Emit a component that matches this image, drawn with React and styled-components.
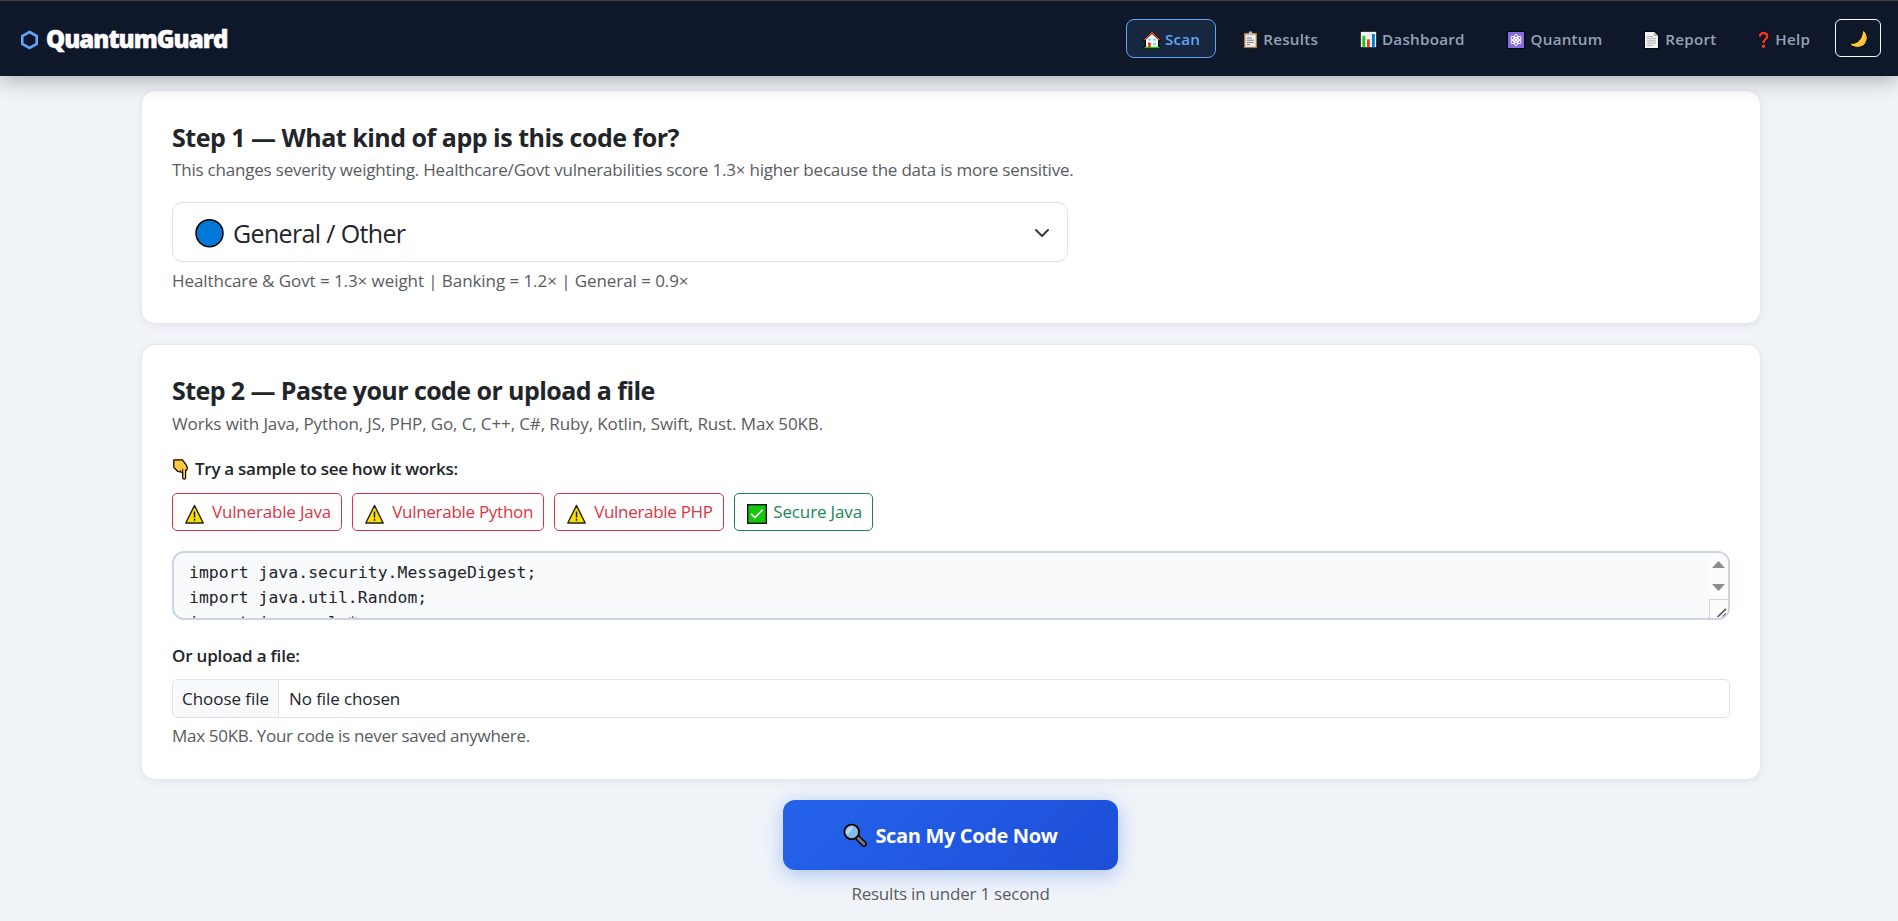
import React from 'react';
import styled, { createGlobalStyle, css } from 'styled-components';

const colors = {
  navy: '#0f172a',
  blue: '#60a5fa',
  slate: '#94a3b8',
  muted: '#595c5f',
  border: '#dee2e6',
  red: '#dc3545',
  green: '#198754'
};

const GlobalStyle = createGlobalStyle`
  * {
    box-sizing: border-box;
  }
  body {
    margin: 0;
    background: #f0f4f9;
    font-family: 'Open Sans', 'Noto Sans', sans-serif;
    font-size: 17px;
    line-height: 26px;
    color: #212529;
  }
  svg {
    display: block;
    flex-shrink: 0;
  }
`;

const Navbar = styled.nav`
  position: relative;
  display: flex;
  justify-content: space-between;
  height: 76px;
  padding: 18px 17px 0 20px;
  border-top: 1px solid #4d3f3d;
  background: ${colors.navy};
  box-shadow: 0 4px 20px rgba(0, 0, 0, 0.3);
`;

const Brand = styled.div`
  display: flex;
  align-items: center;
  gap: 7px;
  height: 40px;
  font-size: 24px;
  font-weight: 800;
  letter-spacing: -0.95px;
  color: #ffffff;
  -webkit-text-stroke: 0.5px #ffffff;
  svg {
    margin-top: 1px;
  }
`;

const NavMenu = styled.div`
  display: flex;
  gap: 7.8px;
`;

const NavItem = styled.a`
  display: flex;
  align-items: center;
  height: 39px;
  padding: 0 15px;
  border: 1px solid transparent;
  border-radius: 8px;
  font-size: 15.2px;
  font-weight: 600;
  letter-spacing: 0.25px;
  color: ${colors.slate};
  ${({ $active }) =>
    $active &&
    css`
      border-color: ${colors.blue};
      background: #172740;
      color: ${colors.blue};
    `}
`;

const IconSlot = styled.span`
  width: ${({ $width }) => $width}px;
  padding: 2px 0 0 ${({ $inset }) => $inset}px;
`;

const ThemeButton = styled.button`
  display: flex;
  align-items: center;
  justify-content: center;
  width: 46px;
  height: 38px;
  padding: 1px 0 0;
  margin-left: 1px;
  border: 1px solid #f8f9fa;
  border-radius: 6px;
  background: transparent;
`;

const Page = styled.main`
  display: flex;
  flex-direction: column;
  padding: 14px 137px 0 141px;
`;

const Card = styled.section`
  padding: ${({ $top }) => $top}px 30px ${({ $bottom }) => $bottom}px;
  margin-bottom: 20px;
  border: 1px solid #e2e8f0;
  border-radius: 14px;
  background: #ffffff;
  box-shadow: 0 2px 8px rgba(15, 23, 42, 0.06);
`;

const Title = styled.h2`
  margin: 0 0 ${({ $gap }) => $gap}px;
  font-size: 25px;
  line-height: 30px;
  font-weight: 700;
  letter-spacing: ${({ $track }) => $track}px;
`;

const Muted = styled.p`
  margin: 0;
  letter-spacing: ${({ $track }) => $track}px;
  color: ${colors.muted};
`;

const Select = styled.div`
  display: flex;
  align-items: center;
  gap: 9px;
  width: 896px;
  height: 60px;
  padding: 1px 17px 0 22px;
  margin: 19px 0 6px;
  border: 1px solid ${colors.border};
  border-radius: 10px;
  font-size: 25px;
  letter-spacing: -0.65px;
`;

const SelectValue = styled.span`
  flex: 1;
`;

const FieldLabel = styled.div`
  display: flex;
  align-items: center;
  gap: 7px;
  margin-top: ${({ $top }) => $top}px;
  font-weight: 600;
  letter-spacing: ${({ $track }) => $track}px;
  svg {
    margin-left: 1px;
  }
`;

const SampleRow = styled.div`
  display: flex;
  gap: 10px;
  margin: 11px 0 20px;
`;

const SampleButton = styled.button`
  display: flex;
  align-items: center;
  gap: ${({ $gap }) => $gap}px;
  height: 38px;
  padding: 0 10px 0 12px;
  border: 1px solid ${({ $color }) => $color};
  border-radius: 5px;
  background: transparent;
  font: inherit;
  letter-spacing: ${({ $track }) => $track}px;
  color: ${({ $color }) => $color};
  svg {
    margin-top: 3px;
  }
`;

const CodeBox = styled.div`
  display: flex;
  height: 69px;
  border: 2px solid #cbd5e1;
  border-radius: 12px;
  background: #f8fafc;
  overflow: hidden;
`;

const Code = styled.pre`
  flex: 1;
  margin: 0;
  padding: 7px 15px;
  overflow: hidden;
  font-family: 'DejaVu Sans Mono', 'Liberation Mono', monospace;
  font-size: 16.4px;
  line-height: 25px;
  letter-spacing: 0.06px;
`;

const ScrollColumn = styled.div`
  display: flex;
  flex-direction: column;
  align-items: center;
  gap: 16px;
  width: 19px;
  padding-top: 8px;
  background: #fcfcfc;
`;

const ResizeCorner = styled.div`
  width: 19px;
  height: 19px;
  margin-top: -8px;
  border-top: 1px solid #d4d4d4;
  border-left: 1px solid #d4d4d4;
`;

const FileInput = styled.div`
  display: flex;
  height: 39px;
  margin: 10px 0 5px;
  border: 1px solid ${colors.border};
  border-radius: 5px;
  line-height: 37px;
  overflow: hidden;
`;

const FileButton = styled.span`
  width: 106px;
  padding-left: 9px;
  border-right: 1px solid ${colors.border};
  background: #f8f9fa;
  letter-spacing: -0.05px;
`;

const FileName = styled.span`
  padding-left: 10px;
  letter-spacing: -0.1px;
`;

const ScanArea = styled.div`
  display: flex;
  flex-direction: column;
  align-items: center;
  gap: 11px;
  margin-right: 1px;
`;

const ScanButton = styled.button`
  display: flex;
  align-items: center;
  justify-content: center;
  gap: 8px;
  width: 335px;
  height: 70px;
  border: 0;
  border-radius: 12px;
  background: linear-gradient(135deg, #2563eb, #1d4ed8);
  box-shadow: 0 4px 20px rgba(37, 99, 235, 0.35);
  font-family: inherit;
  font-size: 20px;
  font-weight: 700;
  letter-spacing: -0.35px;
  color: #ffffff;
`;

const HexagonLogo = () => (
  <svg width="19" height="20" viewBox="0 0 19 20" fill="none" stroke={colors.blue} strokeWidth="2.6">
    <path d="M9.5 2 16.7 6V14L9.5 18 2.3 14V6Z" />
  </svg>
);

const HouseIcon = () => (
  <svg width="18" height="18" viewBox="0 0 18 18">
    <path d="M9 0 18 8.5V10H16.5V15.5H17.5V18H.5V15.5H1.5V10H0V8.5Z" fill="#05070c" />
    <path d="M3 8.5 9 3 15 8.5V16H3Z" fill="#f7f7f7" />
    <path d="M1.2 9 9 1.6 16.8 9" fill="none" stroke="#e8482f" strokeWidth="1.3" />
    <path d="M1.5 16.6H16.5" stroke="#16c60c" strokeWidth="1.4" />
    <rect x="5" y="11.5" width="2.8" height="4.7" fill="#f03a17" />
    <path d="M5 7.6H7.6V9.8H5ZM10.2 7.6H12.8V9.8H10.2ZM10.2 12H12.8V14.2H10.2Z" fill="#50e6ff" />
  </svg>
);

const ClipboardIcon = () => (
  <svg width="15" height="18" viewBox="0 0 15 18">
    <rect x="0" y="1" width="15" height="17" rx="1" fill="#05070c" />
    <rect x=".8" y="1.8" width="13.4" height="15.4" fill="#a4744d" />
    <rect x="2.3" y="3.4" width="10.4" height="12.4" fill="#f0f0f0" />
    <path d="M4 4.3V2.5H6V.6H9V2.5H11V4.3Z" fill="#b8b8b8" />
    <path d="M3.8 7H9M3.8 9.2H11M3.8 11.4H10.5M3.8 13.6H7" stroke="#6d6d6d" strokeWidth=".9" />
  </svg>
);

const ChartIcon = () => (
  <svg width="17" height="17" viewBox="0 0 17 17">
    <rect width="17" height="17" fill="#05070c" />
    <rect x=".8" y=".8" width="15.4" height="15.4" fill="#f5f5f5" />
    <path d="M1 4.5H16M1 8.5H16M1 12.5H16" stroke="#cfcfcf" strokeWidth=".6" />
    <rect x="2.4" y="5.2" width="2.8" height="11" fill="#16c60c" />
    <rect x="7" y="8.5" width="2.8" height="7.7" fill="#f03a17" />
    <rect x="12" y="3" width="2.8" height="13.2" fill="#0078d7" />
  </svg>
);

const AtomIcon = () => (
  <svg width="18" height="18" viewBox="0 0 18 18">
    <rect width="18" height="18" fill="#05070c" />
    <rect x="1" y="1" width="16" height="16" fill="#886ce4" />
    <g fill="none" stroke="#ffffff" strokeWidth="1">
      <ellipse cx="9" cy="9" rx="2.2" ry="5.6" />
      <ellipse cx="9" cy="9" rx="2.2" ry="5.6" transform="rotate(60 9 9)" />
      <ellipse cx="9" cy="9" rx="2.2" ry="5.6" transform="rotate(120 9 9)" />
    </g>
    <circle cx="9" cy="9" r="1.2" fill="#ffffff" />
  </svg>
);

const PageIcon = () => (
  <svg width="15" height="18" viewBox="0 0 15 18">
    <path d="M0 0H11L15 4V18H0Z" fill="#05070c" />
    <path d="M1 1H10.5V4.5H14V17H1Z" fill="#f2f2f2" />
    <path d="M10.5 1 14 4.5H10.5Z" fill="#cccccc" />
    <path d="M2.8 5.5H9M2.8 7.7H12M2.8 9.9H12M2.8 12.1H12M2.8 14.3H9" stroke="#a8a8a8" strokeWidth=".9" />
  </svg>
);

const QuestionIcon = () => (
  <svg width="11" height="18" viewBox="0 0 11 18" fill="none">
    <path d="M2 5.5C1.8 .8 9.2 .8 9.2 5.2 9.2 8.3 5.5 8 5.5 12" stroke="#05070c" strokeWidth="3.8" />
    <path d="M2 5.5C1.8 .8 9.2 .8 9.2 5.2 9.2 8.3 5.5 8 5.5 12" stroke="#f03a17" strokeWidth="2.5" />
    <circle cx="5.5" cy="15.3" r="1.7" fill="#f03a17" />
  </svg>
);

const MoonIcon = () => (
  <svg width="21" height="20" viewBox="0 0 21 20">
    <path
      d="M14.3 1C19.3 3.4 20.9 10 17.3 14.8 13.4 19.8 4.2 19.6 1.2 14 6 15 9.6 13.7 12 10.2 14 7.2 14.7 4 14.3 1Z"
      fill="#ffc83d"
      stroke="#05070c"
      strokeWidth="1"
      strokeLinejoin="round"
    />
    <path d="M17.4 6.5C18.4 9.5 17.8 12.5 15.5 14.7" fill="none" stroke="#f2a223" strokeWidth="1" />
  </svg>
);

const HandIcon = () => (
  <svg width="15" height="21" viewBox="0 0 15 21" stroke="#000000" strokeWidth="1.2" strokeLinejoin="round">
    <path
      d="M.8.8H9.4L13.3 6.2Q14.4 7.8 14.3 10L12.6 12.4V18.7Q12.4 20.1 11.1 20.1 9.8 20.1 9.7 18.7V13.4L4.8 12.5 .8 8.3Z"
      fill="#ffc83d"
    />
    <path d="M9.7 13.4V9.8M7.2 12.8V11.2M12.6 12.4V10.6" fill="none" strokeWidth=".9" />
  </svg>
);

const WarningIcon = () => (
  <svg width="19" height="20" viewBox="0 0 19 20">
    <path d="M9.5 1.5 18.2 19H.8Z" fill="#fce100" stroke="#1f1f1f" strokeWidth="1.4" strokeLinejoin="round" />
    <path d="M9.5 7.5V13.5M9.5 14.8V16.8" stroke="#1f1f1f" strokeWidth="1.5" />
  </svg>
);

const CheckIcon = () => (
  <svg width="20" height="20" viewBox="0 0 20 20" fill="none">
    <rect x=".7" y=".7" width="18.6" height="18.6" fill="#16c60c" stroke="#161616" strokeWidth="1.4" />
    <path d="M4.2 9.8 7.9 13.5 15.6 5.8" stroke="#ffffff" strokeWidth="1.6" />
  </svg>
);

const BlueCircle = () => (
  <svg width="29" height="30" viewBox="0 0 29 30">
    <circle cx="14.5" cy="15.2" r="13.5" fill="#0078d7" stroke="#000000" strokeWidth="1.5" />
  </svg>
);

const Chevron = () => (
  <svg width="16" height="16" viewBox="0 0 16 16" fill="none" stroke="#343a40" strokeWidth="2" strokeLinecap="round" strokeLinejoin="round">
    <path d="m2 5 6 6 6-6" />
  </svg>
);

const SearchIcon = () => (
  <svg width="24" height="24" viewBox="0 0 24 24">
    <path d="M14.5 14.5 21 21" stroke="#000000" strokeWidth="5.6" strokeLinecap="round" />
    <path d="M15 15 21 21" stroke="#767676" strokeWidth="3" strokeLinecap="round" />
    <circle cx="8.7" cy="8.9" r="7.2" fill="#83beec" stroke="#000000" strokeWidth="2.1" />
    <circle cx="8.7" cy="8.9" r="6.1" fill="none" stroke="#a8b4bd" strokeWidth=".8" />
    <path d="M3.4 9.6C3.5 5.8 6.5 3.6 10.2 3.9L4.6 12Z" fill="#b9dcf5" />
  </svg>
);

const ArrowUp = () => (
  <svg width="13" height="7" viewBox="0 0 13 7">
    <path d="M6.5 0 13 7H0Z" fill="#8b8b8b" />
  </svg>
);

const ArrowDown = () => (
  <svg width="13" height="7" viewBox="0 0 13 7">
    <path d="M0 0H13L6.5 7Z" fill="#8b8b8b" />
  </svg>
);

const ResizeGrip = () => (
  <svg width="18" height="18" viewBox="0 0 18 18" fill="none" stroke="#555555" strokeWidth="1.6">
    <path d="M7.5 17 16 8.8M12.5 17 16 13.6" />
  </svg>
);

const navItems = [
  { label: 'Scan', Icon: HouseIcon, width: 23, inset: 1, active: true },
  { label: 'Results', Icon: ClipboardIcon, width: 23.2, inset: 2.5 },
  { label: 'Dashboard', Icon: ChartIcon, width: 24, inset: 2 },
  { label: 'Quantum', Icon: AtomIcon, width: 26, inset: 2 },
  { label: 'Report', Icon: PageIcon, width: 23, inset: 2 },
  { label: 'Help', Icon: QuestionIcon, width: 19, inset: 2 }
];

const samples = [
  { label: 'Vulnerable Java', Icon: WarningIcon, color: colors.red, gap: 8, track: -0.18 },
  { label: 'Vulnerable Python', Icon: WarningIcon, color: colors.red, gap: 8, track: -0.28 },
  { label: 'Vulnerable PHP', Icon: WarningIcon, color: colors.red, gap: 8, track: -0.3 },
  { label: 'Secure Java', Icon: CheckIcon, color: colors.green, gap: 6.5, track: -0.15 }
];

const code = `import java.security.MessageDigest;
import java.util.Random;
import java.sql.*;`;

const App = () => (
  <>
    <GlobalStyle />
    <Navbar>
      <Brand>
        <HexagonLogo />
        <span>QuantumGuard</span>
      </Brand>
      <NavMenu>
        {navItems.map(({ label, Icon, width, inset, active }) => (
          <NavItem key={label} $active={active}>
            <IconSlot $width={width} $inset={inset}>
              <Icon />
            </IconSlot>
            {label}
          </NavItem>
        ))}
        <ThemeButton>
          <MoonIcon />
        </ThemeButton>
      </NavMenu>
    </Navbar>
    <Page>
      <Card $top={31} $bottom={29}>
        <Title $gap={5} $track={-0.49}>
          Step 1 — What kind of app is this code for?
        </Title>
        <Muted $track={-0.2}>
          This changes severity weighting. Healthcare/Govt vulnerabilities score 1.3× higher because the data is more sensitive.
        </Muted>
        <Select>
          <BlueCircle />
          <SelectValue>General / Other</SelectValue>
          <Chevron />
        </Select>
        <Muted $track={-0.07}>Healthcare &amp; Govt = 1.3× weight | Banking = 1.2× | General = 0.9×</Muted>
      </Card>
      <Card $top={30} $bottom={30}>
        <Title $gap={6} $track={-0.57}>
          Step 2 — Paste your code or upload a file
        </Title>
        <Muted $track={-0.115}>Works with Java, Python, JS, PHP, Go, C, C++, C#, Ruby, Kotlin, Swift, Rust. Max 50KB.</Muted>
        <FieldLabel $top={19} $track={-0.28}>
          <HandIcon />
          Try a sample to see how it works:
        </FieldLabel>
        <SampleRow>
          {samples.map(({ label, Icon, color, gap, track }) => (
            <SampleButton key={label} $color={color} $gap={gap} $track={track}>
              <Icon />
              {label}
            </SampleButton>
          ))}
        </SampleRow>
        <CodeBox>
          <Code>{code}</Code>
          <ScrollColumn>
            <ArrowUp />
            <ArrowDown />
            <ResizeCorner>
              <ResizeGrip />
            </ResizeCorner>
          </ScrollColumn>
        </CodeBox>
        <FieldLabel $top={23} $track={-0.18}>
          Or upload a file:
        </FieldLabel>
        <FileInput>
          <FileButton>Choose file</FileButton>
          <FileName>No file chosen</FileName>
        </FileInput>
        <Muted $track={-0.3}>Max 50KB. Your code is never saved anywhere.</Muted>
      </Card>
      <ScanArea>
        <ScanButton>
          <SearchIcon />
          Scan My Code Now
        </ScanButton>
        <Muted $track={-0.22}>Results in under 1 second</Muted>
      </ScanArea>
    </Page>
  </>
);

export default App;
